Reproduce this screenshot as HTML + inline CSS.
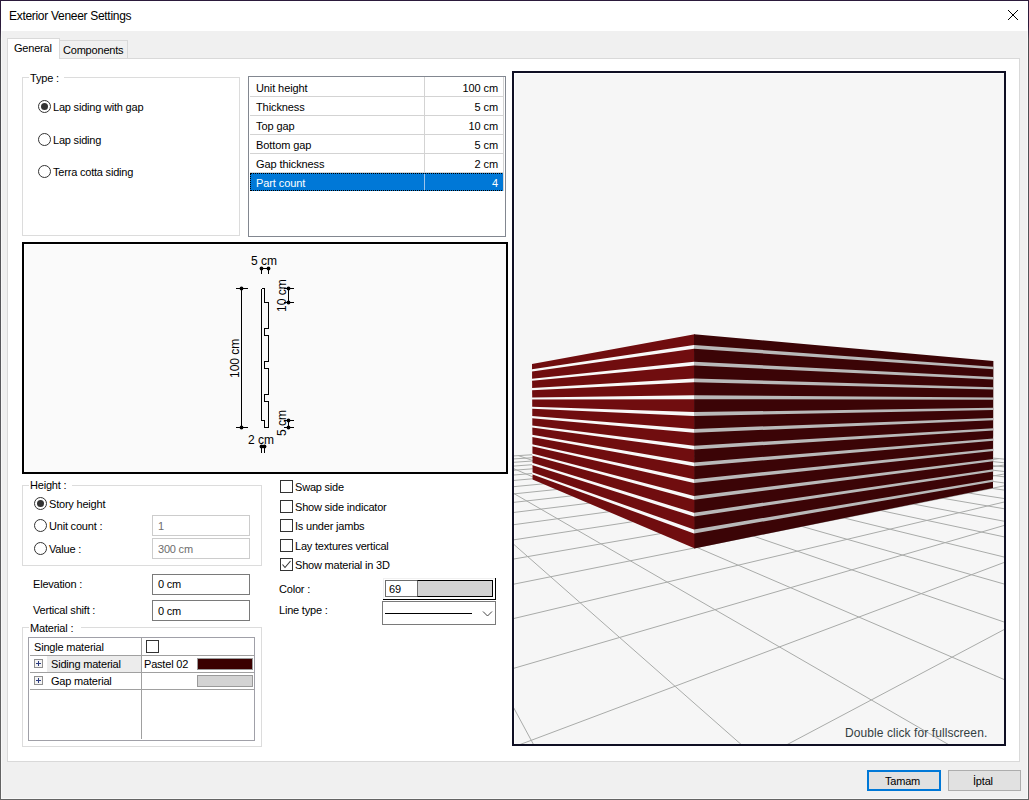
<!DOCTYPE html><html><head><meta charset="utf-8"><style>
html,body{margin:0;padding:0}
body{width:1029px;height:800px;position:relative;overflow:hidden;background:#f0f0f0;font-family:"Liberation Sans",sans-serif;font-size:11px;color:#000}
.a{position:absolute}
.t{position:absolute;white-space:nowrap;line-height:normal}
</style></head><body>
<div class="a" style="left:0px;top:0px;width:1029px;height:1px;box-sizing:border-box;background:#2b1a3b;"></div>
<div class="a" style="left:0;top:0;width:1px;height:800px;background:linear-gradient(#2b1a3b 0px,#2b1a3b 26px,#4a4a4e 40px,#5a5a5e 400px,#646464 800px)"></div>
<div class="a" style="left:1028px;top:0;width:1px;height:800px;background:linear-gradient(#2b1a3b 0px,#2b1a3b 26px,#4a4a4e 40px,#5a5a5e 400px,#646464 800px)"></div>
<div class="a" style="left:0px;top:799px;width:1029px;height:1px;box-sizing:border-box;background:#646464;"></div>
<div class="a" style="left:1px;top:798px;width:1027px;height:1px;box-sizing:border-box;background:#f8f8f8;"></div>
<div class="a" style="left:1px;top:31px;width:1px;height:767px;box-sizing:border-box;background:#f8f8f8;"></div>
<div class="a" style="left:1027px;top:31px;width:1px;height:767px;box-sizing:border-box;background:#f8f8f8;"></div>
<div class="a" style="left:1px;top:1px;width:1027px;height:30px;box-sizing:border-box;background:#fff;"></div>
<div class="t" style="left:9px;top:9px;font-size:12px;color:#000;letter-spacing:-0.3px;">Exterior Veneer Settings</div>
<svg class="a" style="left:1005px;top:7px" width="16" height="16"><path d="M3 3 L13 13 M13 3 L3 13" stroke="#000" stroke-width="1"/></svg>
<div class="a" style="left:7px;top:58px;width:1013px;height:704px;box-sizing:border-box;background:#fff;border:1px solid #d9d9d9;"></div>
<div class="a" style="left:59px;top:40px;width:69px;height:19px;box-sizing:border-box;background:#f0f0f0;border:1px solid #d9d9d9;"></div>
<div class="a" style="left:7px;top:38px;width:53px;height:21px;box-sizing:border-box;background:#fff;border:1px solid #d9d9d9;border-bottom:none;"></div>
<div class="a" style="left:8px;top:58px;width:51px;height:1px;box-sizing:border-box;background:#fff;"></div>
<div class="t" style="left:14px;top:42px;font-size:11px;color:#000;letter-spacing:-0.2px;">General</div>
<div class="t" style="left:63px;top:44px;font-size:11px;color:#000;letter-spacing:-0.2px;">Components</div>
<div class="a" style="left:22px;top:77px;width:218px;height:159px;box-sizing:border-box;border:1px solid #dcdcdc;"></div>
<div class="a" style="left:29px;top:74px;width:35px;height:7px;box-sizing:border-box;background:#fff;"></div>
<div class="t" style="left:30px;top:72px;font-size:11px;color:#000;letter-spacing:-0.2px;">Type :</div>
<div class="a" style="left:38px;top:100px;width:13px;height:13px;box-sizing:border-box;border:1px solid #333;border-radius:50%;background:#fff"></div>
<div class="a" style="left:41px;top:103px;width:7px;height:7px;border-radius:50%;background:#333"></div>
<div class="t" style="left:53px;top:101px;font-size:11px;color:#000;letter-spacing:-0.2px;">Lap siding with gap</div>
<div class="a" style="left:38px;top:133px;width:13px;height:13px;box-sizing:border-box;border:1px solid #333;border-radius:50%;background:#fff"></div>
<div class="t" style="left:53px;top:134px;font-size:11px;color:#000;letter-spacing:-0.2px;">Lap siding</div>
<div class="a" style="left:38px;top:165px;width:13px;height:13px;box-sizing:border-box;border:1px solid #333;border-radius:50%;background:#fff"></div>
<div class="t" style="left:53px;top:166px;font-size:11px;color:#000;letter-spacing:-0.2px;">Terra cotta siding</div>
<div class="a" style="left:248px;top:76px;width:258px;height:161px;box-sizing:border-box;background:#fff;border:1px solid #828790;"></div>
<div class="a" style="left:250px;top:96px;width:254px;height:1px;box-sizing:border-box;background:#d3d3d3;"></div>
<div class="a" style="left:424px;top:77px;width:1px;height:19px;box-sizing:border-box;background:#d3d3d3;"></div>
<div class="t" style="left:256px;top:82px;font-size:11px;color:#000;letter-spacing:-0.1px;">Unit height</div>
<div class="t" style="right:531px;top:82px;font-size:11px;color:#000;letter-spacing:-0.1px;">100 cm</div>
<div class="a" style="left:250px;top:115px;width:254px;height:1px;box-sizing:border-box;background:#d3d3d3;"></div>
<div class="a" style="left:424px;top:96px;width:1px;height:19px;box-sizing:border-box;background:#d3d3d3;"></div>
<div class="t" style="left:256px;top:101px;font-size:11px;color:#000;letter-spacing:-0.1px;">Thickness</div>
<div class="t" style="right:531px;top:101px;font-size:11px;color:#000;letter-spacing:-0.1px;">5 cm</div>
<div class="a" style="left:250px;top:134px;width:254px;height:1px;box-sizing:border-box;background:#d3d3d3;"></div>
<div class="a" style="left:424px;top:115px;width:1px;height:19px;box-sizing:border-box;background:#d3d3d3;"></div>
<div class="t" style="left:256px;top:120px;font-size:11px;color:#000;letter-spacing:-0.1px;">Top gap</div>
<div class="t" style="right:531px;top:120px;font-size:11px;color:#000;letter-spacing:-0.1px;">10 cm</div>
<div class="a" style="left:250px;top:153px;width:254px;height:1px;box-sizing:border-box;background:#d3d3d3;"></div>
<div class="a" style="left:424px;top:134px;width:1px;height:19px;box-sizing:border-box;background:#d3d3d3;"></div>
<div class="t" style="left:256px;top:139px;font-size:11px;color:#000;letter-spacing:-0.1px;">Bottom gap</div>
<div class="t" style="right:531px;top:139px;font-size:11px;color:#000;letter-spacing:-0.1px;">5 cm</div>
<div class="a" style="left:250px;top:172px;width:254px;height:1px;box-sizing:border-box;background:#d3d3d3;"></div>
<div class="a" style="left:424px;top:153px;width:1px;height:19px;box-sizing:border-box;background:#d3d3d3;"></div>
<div class="t" style="left:256px;top:158px;font-size:11px;color:#000;letter-spacing:-0.1px;">Gap thickness</div>
<div class="t" style="right:531px;top:158px;font-size:11px;color:#000;letter-spacing:-0.1px;">2 cm</div>
<div class="a" style="left:250px;top:173px;width:254px;height:18px;box-sizing:border-box;background:#0078d7;"></div>
<div class="a" style="left:250px;top:173px;width:254px;height:18px;box-sizing:border-box;border:1px dotted #000"></div>
<div class="a" style="left:424px;top:174px;width:1px;height:16px;box-sizing:border-box;background:#9cc4ec;"></div>
<div class="t" style="left:256px;top:177px;font-size:11px;color:#fff;letter-spacing:-0.1px;">Part count</div>
<div class="t" style="right:531px;top:177px;font-size:11px;color:#fff;letter-spacing:-0.1px;">4</div>
<div class="a" style="left:503px;top:77px;width:1px;height:114px;box-sizing:border-box;background:#d3d3d3;"></div>
<div class="a" style="left:22px;top:242px;width:486px;height:232px;box-sizing:border-box;background:#fafafa;border:2px solid #000;"></div>
<div class="a" style="left:24px;top:244px;width:482px;height:1px;box-sizing:border-box;background:#fff;"></div>
<div class="a" style="left:24px;top:244px;width:1px;height:228px;box-sizing:border-box;background:#fff;"></div>
<svg class="a" style="left:0;top:0" width="1029" height="800"><path d="M261.5 288.5 L264.5 288.5 L264.5 302.5 L268.5 302.5 L268.5 328.5 L264.5 328.5 L264.5 335.5 L268.5 335.5 L268.5 361.5 L264.5 361.5 L264.5 368.5 L268.5 368.5 L268.5 394.5 L264.5 394.5 L264.5 401.5 L268.5 401.5 L268.5 427.5 L264.5 427.5 L264.5 420.5 L261.5 420.5 L261.5 288.5" fill="none" stroke="#000" stroke-width="1" shape-rendering="crispEdges"/><path d="M241.5 288.5 L241.5 427.5" stroke="#000" stroke-width="1" shape-rendering="crispEdges"/><path d="M235.5 288.5 L247.5 288.5" stroke="#000" stroke-width="1" shape-rendering="crispEdges"/><path d="M235.5 427.5 L247.5 427.5" stroke="#000" stroke-width="1" shape-rendering="crispEdges"/><circle cx="241.5" cy="288.5" r="1.9" fill="#000"/><circle cx="241.5" cy="427.5" r="1.9" fill="#000"/><path d="M261.5 268.5 L261.5 273.5" stroke="#000" stroke-width="1" shape-rendering="crispEdges"/><path d="M268.5 268.5 L268.5 273.5" stroke="#000" stroke-width="1" shape-rendering="crispEdges"/><path d="M261.5 268.5 L268.5 268.5" stroke="#000" stroke-width="1" shape-rendering="crispEdges"/><circle cx="261.5" cy="268.5" r="1.9" fill="#000"/><circle cx="268.5" cy="268.5" r="1.9" fill="#000"/><path d="M288.5 288.5 L288.5 302.5" stroke="#000" stroke-width="1" shape-rendering="crispEdges"/><path d="M283.5 288.5 L293.5 288.5" stroke="#000" stroke-width="1" shape-rendering="crispEdges"/><path d="M283.5 302.5 L293.5 302.5" stroke="#000" stroke-width="1" shape-rendering="crispEdges"/><circle cx="288.5" cy="288.5" r="1.9" fill="#000"/><circle cx="288.5" cy="302.5" r="1.9" fill="#000"/><path d="M288.5 420.5 L288.5 427.5" stroke="#000" stroke-width="1" shape-rendering="crispEdges"/><path d="M283.5 420.5 L293.5 420.5" stroke="#000" stroke-width="1" shape-rendering="crispEdges"/><path d="M283.5 427.5 L293.5 427.5" stroke="#000" stroke-width="1" shape-rendering="crispEdges"/><circle cx="288.5" cy="420.5" r="1.9" fill="#000"/><circle cx="288.5" cy="427.5" r="1.9" fill="#000"/><path d="M261.5 446.5 L261.5 452.5" stroke="#000" stroke-width="1" shape-rendering="crispEdges"/><path d="M264.5 446.5 L264.5 452.5" stroke="#000" stroke-width="1" shape-rendering="crispEdges"/><path d="M261.5 446.5 L264.5 446.5" stroke="#000" stroke-width="1" shape-rendering="crispEdges"/><circle cx="261.5" cy="446.5" r="1.9" fill="#000"/><circle cx="264.5" cy="446.5" r="1.9" fill="#000"/><text x="251" y="265" font-family="Liberation Sans" font-size="12" fill="#000">5 cm</text><text x="248" y="444" font-family="Liberation Sans" font-size="12" fill="#000">2 cm</text><text transform="translate(238.5 378) rotate(-90)" font-family="Liberation Sans" font-size="12" fill="#000">100 cm</text><text transform="translate(285.5 312) rotate(-90)" font-family="Liberation Sans" font-size="12" fill="#000">10 cm</text><text transform="translate(285.5 436) rotate(-90)" font-family="Liberation Sans" font-size="12" fill="#000">5 cm</text></svg>
<div class="a" style="left:22px;top:485px;width:240px;height:81px;box-sizing:border-box;border:1px solid #dcdcdc;"></div>
<div class="a" style="left:29px;top:482px;width:43px;height:7px;box-sizing:border-box;background:#fff;"></div>
<div class="t" style="left:30px;top:479px;font-size:11px;color:#000;letter-spacing:-0.2px;">Height :</div>
<div class="a" style="left:34px;top:497px;width:13px;height:13px;box-sizing:border-box;border:1px solid #333;border-radius:50%;background:#fff"></div>
<div class="a" style="left:37px;top:500px;width:7px;height:7px;border-radius:50%;background:#333"></div>
<div class="t" style="left:49px;top:498px;font-size:11px;color:#000;letter-spacing:-0.2px;">Story height</div>
<div class="a" style="left:34px;top:519px;width:13px;height:13px;box-sizing:border-box;border:1px solid #333;border-radius:50%;background:#fff"></div>
<div class="t" style="left:49px;top:520px;font-size:11px;color:#000;letter-spacing:-0.2px;">Unit count :</div>
<div class="a" style="left:34px;top:542px;width:13px;height:13px;box-sizing:border-box;border:1px solid #333;border-radius:50%;background:#fff"></div>
<div class="t" style="left:49px;top:543px;font-size:11px;color:#000;letter-spacing:-0.2px;">Value :</div>
<div class="a" style="left:152px;top:515px;width:98px;height:21px;box-sizing:border-box;background:#fff;border:1px solid #cccccc;"></div>
<div class="t" style="left:158px;top:520px;font-size:11px;color:#6d6d6d;letter-spacing:-0.2px;">1</div>
<div class="a" style="left:152px;top:538px;width:98px;height:21px;box-sizing:border-box;background:#fff;border:1px solid #cccccc;"></div>
<div class="t" style="left:158px;top:543px;font-size:11px;color:#6d6d6d;letter-spacing:-0.2px;">300 cm</div>
<div class="t" style="left:33px;top:578px;font-size:11px;color:#000;letter-spacing:-0.2px;">Elevation :</div>
<div class="a" style="left:152px;top:574px;width:98px;height:21px;box-sizing:border-box;background:#fff;border:1px solid #7a7a7a;"></div>
<div class="t" style="left:158px;top:578px;font-size:11px;color:#000;letter-spacing:-0.2px;">0 cm</div>
<div class="t" style="left:33px;top:604px;font-size:11px;color:#000;letter-spacing:-0.2px;">Vertical shift :</div>
<div class="a" style="left:152px;top:600px;width:98px;height:21px;box-sizing:border-box;background:#fff;border:1px solid #7a7a7a;"></div>
<div class="t" style="left:158px;top:605px;font-size:11px;color:#000;letter-spacing:-0.2px;">0 cm</div>
<div class="a" style="left:22px;top:627px;width:240px;height:120px;box-sizing:border-box;border:1px solid #dcdcdc;"></div>
<div class="a" style="left:29px;top:624px;width:52px;height:7px;box-sizing:border-box;background:#fff;"></div>
<div class="t" style="left:30px;top:622px;font-size:11px;color:#000;letter-spacing:-0.2px;">Material :</div>
<div class="a" style="left:28px;top:637px;width:227px;height:104px;box-sizing:border-box;background:#fff;border:1px solid #a0a0a8;"></div>
<div class="a" style="left:141px;top:638px;width:1px;height:101px;box-sizing:border-box;background:#a0a0a0;"></div>
<div class="a" style="left:30px;top:655px;width:224px;height:1px;box-sizing:border-box;background:#a0a0a0;"></div>
<div class="a" style="left:30px;top:672px;width:224px;height:1px;box-sizing:border-box;background:#a0a0a0;"></div>
<div class="a" style="left:30px;top:689px;width:224px;height:1px;box-sizing:border-box;background:#a0a0a0;"></div>
<div class="t" style="left:34px;top:641px;font-size:11px;color:#000;letter-spacing:-0.2px;">Single material</div>
<div class="a" style="left:146px;top:640px;width:13px;height:13px;box-sizing:border-box;border:1px solid #333;background:#fff"></div>
<div class="a" style="left:47px;top:656px;width:94px;height:16px;box-sizing:border-box;background:#ececec;"></div>
<div class="a" style="left:34px;top:659px;width:9px;height:9px;box-sizing:border-box;border:1px solid #8f8f8f;background:#f4f4f4"></div><div class="a" style="left:36px;top:663px;width:5px;height:1px;background:#2c3c80"></div><div class="a" style="left:38px;top:661px;width:1px;height:5px;background:#2c3c80"></div>
<div class="a" style="left:34px;top:676px;width:9px;height:9px;box-sizing:border-box;border:1px solid #8f8f8f;background:#f4f4f4"></div><div class="a" style="left:36px;top:680px;width:5px;height:1px;background:#2c3c80"></div><div class="a" style="left:38px;top:678px;width:1px;height:5px;background:#2c3c80"></div>
<div class="t" style="left:51px;top:658px;font-size:11px;color:#000;letter-spacing:-0.2px;">Siding material</div>
<div class="t" style="left:51px;top:675px;font-size:11px;color:#000;letter-spacing:-0.2px;">Gap material</div>
<div class="t" style="left:144px;top:658px;font-size:11px;color:#000;letter-spacing:-0.2px;">Pastel 02</div>
<div class="a" style="left:197px;top:658px;width:56px;height:12px;box-sizing:border-box;background:#3a0000;border:1px solid #9a9a9a;"></div>
<div class="a" style="left:197px;top:675px;width:56px;height:12px;box-sizing:border-box;background:#d3d3d3;border:1px solid #9a9a9a;"></div>
<div class="a" style="left:280px;top:480px;width:13px;height:13px;box-sizing:border-box;border:1px solid #333;background:#fff"></div>
<div class="t" style="left:295px;top:481px;font-size:11px;color:#000;letter-spacing:-0.2px;">Swap side</div>
<div class="a" style="left:280px;top:500px;width:13px;height:13px;box-sizing:border-box;border:1px solid #333;background:#fff"></div>
<div class="t" style="left:295px;top:501px;font-size:11px;color:#000;letter-spacing:-0.2px;">Show side indicator</div>
<div class="a" style="left:280px;top:519px;width:13px;height:13px;box-sizing:border-box;border:1px solid #333;background:#fff"></div>
<div class="t" style="left:295px;top:520px;font-size:11px;color:#000;letter-spacing:-0.2px;">Is under jambs</div>
<div class="a" style="left:280px;top:539px;width:13px;height:13px;box-sizing:border-box;border:1px solid #333;background:#fff"></div>
<div class="t" style="left:295px;top:540px;font-size:11px;color:#000;letter-spacing:-0.2px;">Lay textures vertical</div>
<div class="a" style="left:280px;top:558px;width:13px;height:13px;box-sizing:border-box;border:1px solid #333;background:#fff"></div>
<svg class="a" style="left:280px;top:558px" width="13" height="13"><path d="M2.5 6.5 L5 9.5 L10.5 3" fill="none" stroke="#333" stroke-width="1.1"/></svg>
<div class="t" style="left:295px;top:559px;font-size:11px;color:#000;letter-spacing:-0.2px;">Show material in 3D</div>
<div class="t" style="left:279px;top:583px;font-size:11px;color:#000;letter-spacing:-0.2px;">Color :</div>
<div class="a" style="left:383px;top:578px;width:113px;height:22px;box-sizing:border-box;background:#fff;border:1px solid #f0f0f0;"></div>
<div class="a" style="left:383px;top:599px;width:113px;height:1px;box-sizing:border-box;background:#000;"></div>
<div class="a" style="left:495px;top:578px;width:1px;height:22px;box-sizing:border-box;background:#000;"></div>
<div class="a" style="left:385px;top:580px;width:108px;height:17px;box-sizing:border-box;background:#fff;border:1px solid #6d6d6d;"></div>
<div class="a" style="left:417px;top:580px;width:76px;height:17px;box-sizing:border-box;background:#d3d3d3;border:1px solid #000;border-left-color:#6d6d6d;"></div>
<div class="t" style="left:389px;top:583px;font-size:11px;color:#000;letter-spacing:-0.2px;">69</div>
<div class="t" style="left:279px;top:604px;font-size:11px;color:#000;letter-spacing:-0.2px;">Line type :</div>
<div class="a" style="left:382px;top:601px;width:114px;height:24px;box-sizing:border-box;background:#fff;border:1px solid #7a7a7a;"></div>
<div class="a" style="left:385px;top:613px;width:87px;height:1px;box-sizing:border-box;background:#000;"></div>
<svg class="a" style="left:480px;top:608px" width="14" height="10"><path d="M3 3.5 L7.5 8 L12 3.5" fill="none" stroke="#444" stroke-width="1"/></svg>
<div class="a" style="left:512px;top:71px;width:494px;height:675px;box-sizing:border-box;background:#f6f6f6;border:2px solid #0f0f23;"></div>
<div class="a" style="left:514px;top:73px;width:490px;height:1px;box-sizing:border-box;background:#fdfdfd;"></div>
<div class="a" style="left:514px;top:73px;width:1px;height:671px;box-sizing:border-box;background:#fdfdfd;"></div>
<svg class="a" style="left:514px;top:73px" width="490" height="671" viewBox="514 73 490 671"><path d="M-5303.82 4884.92L250.29 472.22M-2610.64 4889.99L297.76 469.28M125.15 4166.68L341.59 466.56M1010.68 1628.89L382.18 464.05M1183.47 1133.73L419.87 461.71M1257.09 922.75L454.97 459.53M1297.88 805.85L487.74 457.50M1323.79 731.58L518.39 455.60M1341.71 680.22L547.14 453.82M1354.85 642.58L574.14 452.15M1364.89 613.81L599.56 450.57M1372.81 591.11L623.53 449.09M1379.22 572.74L646.17 447.69M1384.51 557.56L667.59 446.36M1388.96 544.82L687.89 445.10M1392.74 533.97L707.14 443.91M1396.01 524.62L725.43 442.77M1398.85 516.47L742.84 441.70M1401.35 509.31L759.41 440.67M1403.56 502.98L775.21 439.69M1405.53 497.32L790.30 438.75M-128.87 4894.67L1405.53 497.32M-3573.23 4888.18L1336.95 490.79M-1855.96 2145.62L1276.70 485.06M-643.11 1182.02L1223.36 479.98M-291.88 902.97L1175.80 475.45M-124.77 770.21L1133.13 471.39M-27.07 692.58L1094.63 467.73M37.03 641.65L1059.72 464.40M82.32 605.67L1027.92 461.37M116.02 578.90L998.83 458.61M142.07 558.20L972.12 456.06M162.82 541.72L947.51 453.72M179.73 528.28L924.76 451.55M193.77 517.12L903.67 449.55M205.63 507.71L884.06 447.68M215.77 499.65L865.78 445.94M224.54 492.68L848.70 444.31M232.20 486.60L832.71 442.79M238.95 481.23L817.70 441.36M244.94 476.47L803.59 440.02M250.29 472.22L790.30 438.75" stroke="#a9aba9" stroke-width="1.0" fill="none"/><path d="M532.00 364.10L694.60 334.20L695.00 548.40L532.60 479.50Z" fill="#700d0f"/><path d="M694.00 334.20L993.40 361.10L993.00 487.90L694.40 548.40Z" fill="#3b0406"/><path d="M532.00 369.35L694.00 345.00L694.00 348.80L532.00 371.45Z" fill="#f8f8f8"/><path d="M694.00 345.00L993.40 366.85L993.40 369.15L694.00 348.80Z" fill="#b9b9b9"/><path d="M532.00 378.70L694.00 361.78L694.00 365.58L532.00 380.80Z" fill="#f8f8f8"/><path d="M694.00 361.78L993.40 377.08L993.40 379.38L694.00 365.58Z" fill="#b9b9b9"/><path d="M532.00 388.05L694.00 378.56L694.00 382.36L532.00 390.15Z" fill="#f8f8f8"/><path d="M694.00 378.56L993.40 387.31L993.40 389.61L694.00 382.36Z" fill="#b9b9b9"/><path d="M532.00 397.40L694.00 395.34L694.00 399.14L532.00 399.50Z" fill="#f8f8f8"/><path d="M694.00 395.34L993.40 397.54L993.40 399.84L694.00 399.14Z" fill="#b9b9b9"/><path d="M532.00 406.75L694.00 412.12L694.00 415.92L532.00 408.85Z" fill="#f8f8f8"/><path d="M694.00 412.12L993.40 407.77L993.40 410.07L694.00 415.92Z" fill="#b9b9b9"/><path d="M532.00 416.10L694.00 428.90L694.00 432.70L532.00 418.20Z" fill="#f8f8f8"/><path d="M694.00 428.90L993.40 418.00L993.40 420.30L694.00 432.70Z" fill="#b9b9b9"/><path d="M532.00 425.45L694.00 445.68L694.00 449.48L532.00 427.55Z" fill="#f8f8f8"/><path d="M694.00 445.68L993.40 428.23L993.40 430.53L694.00 449.48Z" fill="#b9b9b9"/><path d="M532.00 434.80L694.00 462.46L694.00 466.26L532.00 436.90Z" fill="#f8f8f8"/><path d="M694.00 462.46L993.40 438.46L993.40 440.76L694.00 466.26Z" fill="#b9b9b9"/><path d="M532.00 444.15L694.00 479.24L694.00 483.04L532.00 446.25Z" fill="#f8f8f8"/><path d="M694.00 479.24L993.40 448.69L993.40 450.99L694.00 483.04Z" fill="#b9b9b9"/><path d="M532.00 453.50L694.00 496.02L694.00 499.82L532.00 455.60Z" fill="#f8f8f8"/><path d="M694.00 496.02L993.40 458.92L993.40 461.22L694.00 499.82Z" fill="#b9b9b9"/><path d="M532.00 462.85L694.00 512.80L694.00 516.60L532.00 464.95Z" fill="#f8f8f8"/><path d="M694.00 512.80L993.40 469.15L993.40 471.45L694.00 516.60Z" fill="#b9b9b9"/><path d="M532.00 472.20L694.00 529.58L694.00 533.38L532.00 474.30Z" fill="#f8f8f8"/><path d="M694.00 529.58L993.40 479.38L993.40 481.68L694.00 533.38Z" fill="#b9b9b9"/></svg>
<div class="t" style="left:845px;top:726px;font-size:12px;color:#334040;letter-spacing:0.08px;">Double click for fullscreen.</div>
<div class="a" style="left:867px;top:770px;width:74px;height:21px;box-sizing:border-box;background:#e1e1e1;border:2px solid #0078d7;"></div>
<div class="t" style="left:885px;top:775px;font-size:11px;color:#000;letter-spacing:-0.2px;">Tamam</div>
<div class="a" style="left:948px;top:770px;width:73px;height:21px;box-sizing:border-box;background:#e1e1e1;border:1px solid #adadad;"></div>
<div class="t" style="left:973px;top:775px;font-size:11px;color:#000;letter-spacing:-0.2px;">İptal</div>
</body></html>
